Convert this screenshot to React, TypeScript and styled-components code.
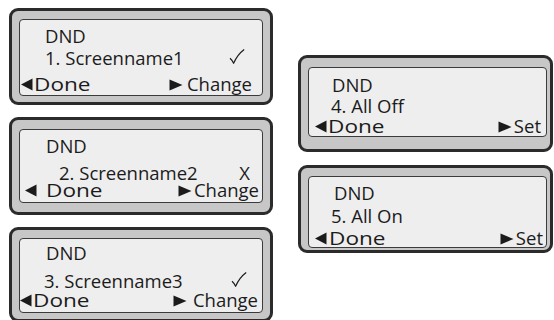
import styled, { createGlobalStyle } from "styled-components";

type Screen = {
  title: string;
  item: string;
  marker?: "check" | "x";
  action: string;
  frame: { pad: string; width: number };
  screenHeight: number;
  tops: [number, number, number];
  titleIndent: number;
  itemIndent: number;
  markerRight: number;
  keys: { left: number; leftGap: number; rightGap: number; right: number };
};

const leftColumn: Screen[] = [
  {
    title: "DND",
    item: "1. Screenname1",
    marker: "check",
    action: "Change",
    frame: { pad: "8px 7px 6px 7px", width: 264 },
    screenHeight: 77,
    tops: [7, 4, 8],
    titleIndent: 25,
    itemIndent: 25,
    markerRight: 17,
    keys: { left: 1, leftGap: 1, rightGap: 4, right: 10 },
  },
  {
    title: "DND",
    item: "2. Screenname2",
    marker: "x",
    action: "Change",
    frame: { pad: "9px 7px 9px 7px", width: 264 },
    screenHeight: 74,
    tops: [7, 9, -1],
    titleIndent: 26,
    itemIndent: 39,
    markerRight: 12,
    keys: { left: 5, leftGap: 9, rightGap: 2, right: 3 },
  },
  {
    title: "DND",
    item: "3. Screenname3",
    marker: "check",
    action: "Change",
    frame: { pad: "8px 7px 6px 7px", width: 264 },
    screenHeight: 75,
    tops: [5, 10, 1],
    titleIndent: 26,
    itemIndent: 24,
    markerRight: 15,
    keys: { left: 0, leftGap: 1, rightGap: 6, right: 4 },
  },
];

const rightColumn: Screen[] = [
  {
    title: "DND",
    item: "4. All Off",
    action: "Set",
    frame: { pad: "9px 3px 12px 7px", width: 255 },
    screenHeight: 70,
    tops: [8, 3, 2],
    titleIndent: 23,
    itemIndent: 22,
    markerRight: 0,
    keys: { left: 6, leftGap: 1, rightGap: 2, right: 5 },
  },
  {
    title: "DND",
    item: "5. All On",
    action: "Set",
    frame: { pad: "8px 3px 2px 7px", width: 255 },
    screenHeight: 72,
    tops: [7, 5, 4],
    titleIndent: 25,
    itemIndent: 22,
    markerRight: 0,
    keys: { left: 6, leftGap: 2, rightGap: 2, right: 3 },
  },
];

function LeftArrow() {
  return (
    <S.Arrow width="12" height="13" viewBox="0 0 12 13">
      <polygon points="0,6.5 11.5,0.5 11.5,12.5" fill="#1b1b1b" />
    </S.Arrow>
  );
}

function RightArrow() {
  return (
    <S.Arrow width="14" height="12" viewBox="0 0 14 12">
      <polygon points="0.5,0.5 13.5,6 0.5,11.5" fill="#1b1b1b" />
    </S.Arrow>
  );
}

function Check() {
  return (
    <S.Check width="16" height="15" viewBox="0 0 16 15">
      <path
        d="M1 9.2 C2.4 10.4 3.6 12 4.6 14.3 C7.2 8.6 10.6 4 15.2 0.6"
        fill="none"
        stroke="#1b1b1b"
        strokeWidth="1.2"
        strokeLinejoin="round"
      />
    </S.Check>
  );
}

function PhoneScreen({ screen }: { screen: Screen }) {
  const { keys } = screen;
  return (
    <S.Frame $pad={screen.frame.pad} $width={screen.frame.width}>
      <S.Display $height={screen.screenHeight}>
        <S.Line $top={screen.tops[0]} $indent={screen.titleIndent}>
          {screen.title}
        </S.Line>
        <S.ItemLine
          $top={screen.tops[1]}
          $indent={screen.itemIndent}
          $right={screen.markerRight}
        >
          <span>{screen.item}</span>
          {screen.marker === "check" && <Check />}
          {screen.marker === "x" && <span>X</span>}
        </S.ItemLine>
        <S.KeyLine $top={screen.tops[2]} $left={keys.left} $right={keys.right}>
          <S.Key $gap={keys.leftGap}>
            <LeftArrow />
            <S.Done>Done</S.Done>
          </S.Key>
          <S.Key $gap={keys.rightGap}>
            <RightArrow />
            <span>{screen.action}</span>
          </S.Key>
        </S.KeyLine>
      </S.Display>
    </S.Frame>
  );
}

export default function App() {
  return (
    <>
      <GlobalStyle />
      <S.Page>
        <S.Column $top={8} $gap={12}>
          {leftColumn.map((screen) => (
            <PhoneScreen key={screen.item} screen={screen} />
          ))}
        </S.Column>
        <S.Column $top={55} $gap={13}>
          {rightColumn.map((screen) => (
            <PhoneScreen key={screen.item} screen={screen} />
          ))}
        </S.Column>
      </S.Page>
    </>
  );
}

const GlobalStyle = createGlobalStyle`
  html, body {
    margin: 0;
    padding: 0;
    background: #ffffff;
    overflow: hidden;
  }

  body {
    font-family: "Open Sans", "Liberation Sans", sans-serif;
  }
`;

const S = {
  Page: styled.div`
    display: flex;
    gap: 25px;
    width: 554px;
    height: 320px;
    padding-left: 9px;
    box-sizing: border-box;
    overflow: hidden;
  `,

  Column: styled.div<{ $top: number; $gap: number }>`
    display: flex;
    flex-direction: column;
    gap: ${({ $gap }) => $gap}px;
    padding-top: ${({ $top }) => $top}px;
  `,

  Frame: styled.div<{ $pad: string; $width: number }>`
    width: ${({ $width }) => $width}px;
    box-sizing: border-box;
    padding: ${({ $pad }) => $pad};
    background: #c7c7c7;
    border: 3px solid #2b2b2b;
    border-radius: 9px;
    flex-shrink: 0;
  `,

  Display: styled.div<{ $height: number }>`
    display: flex;
    flex-direction: column;
    height: ${({ $height }) => $height}px;
    box-sizing: border-box;
    background: #eeeeee;
    border: 1px solid #3b3b3b;
    border-radius: 4px;
    color: #1b1b1b;
    font-size: 18.5px;
    line-height: 18px;
  `,

  Line: styled.div<{ $top: number; $indent: number }>`
    margin-top: ${({ $top }) => $top}px;
    padding-left: ${({ $indent }) => $indent}px;
    white-space: nowrap;
  `,

  ItemLine: styled.div<{ $top: number; $indent: number; $right: number }>`
    display: flex;
    justify-content: space-between;
    align-items: flex-end;
    margin-top: ${({ $top }) => $top}px;
    padding-left: ${({ $indent }) => $indent}px;
    padding-right: ${({ $right }) => $right}px;
    white-space: nowrap;
  `,

  KeyLine: styled.div<{ $top: number; $left: number; $right: number }>`
    display: flex;
    justify-content: space-between;
    margin-top: ${({ $top }) => $top}px;
    padding-left: ${({ $left }) => $left}px;
    padding-right: ${({ $right }) => $right}px;
    white-space: nowrap;
  `,

  Key: styled.div<{ $gap: number }>`
    display: flex;
    align-items: center;
    gap: ${({ $gap }) => $gap}px;
  `,

  Done: styled.span`
    display: inline-block;
    transform: scaleX(1.22);
    transform-origin: left center;
  `,

  Arrow: styled.svg`
    display: block;
    margin-top: 1px;
  `,

  Check: styled.svg`
    display: block;
    margin-bottom: 3px;
  `,
};
